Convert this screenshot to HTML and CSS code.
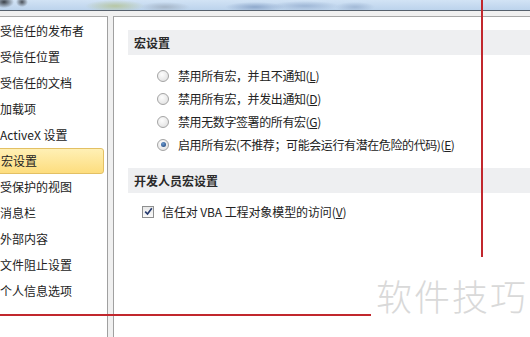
FILE: index.html
```html
<!doctype html>
<html>
<head>
    <meta charset="utf-8">
    <title>宏设置</title>
    <link rel="stylesheet" href="styles.css">
</head>
<body>

<div class="titlebar"></div>

<div class="main">
    <ul class="nav">
        <li>受信任的发布者</li>
        <li>受信任位置</li>
        <li>受信任的文档</li>
        <li>加载项</li>
        <li>ActiveX 设置</li>
        <li class="selected">宏设置</li>
        <li>受保护的视图</li>
        <li>消息栏</li>
        <li>外部内容</li>
        <li>文件阻止设置</li>
        <li>个人信息选项</li>
    </ul>

    <div class="content">
        <div class="group">宏设置</div>
        <div class="options">
            <label class="opt"><span class="radio"></span>禁用所有宏，并且不通知(<u>L</u>)</label>
            <label class="opt"><span class="radio"></span>禁用所有宏，并发出通知(<u>D</u>)</label>
            <label class="opt"><span class="radio"></span>禁用无数字签署的所有宏(<u>G</u>)</label>
            <label class="opt"><span class="radio on"></span>启用所有宏(不推荐；可能会运行有潜在危险的代码)(<u>E</u>)</label>
        </div>

        <div class="group second">开发人员宏设置</div>
        <label class="check-row">
            <span class="check"><svg width="9" height="9" viewBox="0 0 9 9"><path d="M1.2 4.6 L3.5 7 L7.8 1.3" fill="none" stroke="#253a6e" stroke-width="1.6"/></svg></span>
            信任对 VBA 工程对象模型的访问(<u>V</u>)
        </label>
    </div>
</div>

<div class="mark-v"></div>
<div class="mark-h"></div>
<div class="watermark">软件技巧</div>

</body>
</html>
```

FILE: styles.css
```css
html, body { margin: 0; }
body {
    width: 530px; height: 337px; overflow: hidden;
    position: relative;
    background: #f0f0f0;
    font-family: "Microsoft YaHei", "Noto Sans CJK SC", sans-serif;
    font-size: 12px;
    color: #222;
}

.titlebar {
    height: 10px;
    border-bottom: 1px solid #56606c;
    background:
        radial-gradient(ellipse 10px 6px at 4px 2px, #3a4048, transparent),
        radial-gradient(ellipse 6px 5px at 22px 2px, #4a5058, transparent),
        radial-gradient(ellipse 30px 6px at 115px 6px, #b7c7a4, transparent),
        radial-gradient(ellipse 25px 5px at 165px 7px, #a6b6c8, transparent),
        radial-gradient(ellipse 30px 5px at 255px 7px, #8fa9cc, transparent),
        radial-gradient(ellipse 35px 5px at 305px 6px, #9fb7d6, transparent),
        radial-gradient(ellipse 20px 5px at 355px 7px, #a2b9d6, transparent),
        linear-gradient(#d2e3f5, #bcd3ec);
}

.main {
    display: flex;
    gap: 5px;
    padding-top: 5px;
    height: 321px;
}

.nav {
    list-style: none;
    margin: 0; padding: 1px 0 0;
    width: 107px;
    background: #fff;
    border-top: 1px solid #a8a8a8;
    border-right: 1px solid #a0a0a0;
    overflow: hidden;
}
.nav li {
    height: 26px; line-height: 26px;
    white-space: nowrap;
}
.nav .selected {
    margin: 0 3px 0 -4px;
    padding-left: 4px;
    height: 24px; line-height: 24px;
    border: 1px solid #e3c064;
    border-radius: 3px;
    background: linear-gradient(#fff0b5, #fddd7e);
}

.content {
    flex: 1;
    background: #fff;
    border-top: 1px solid #a8a8a8;
    border-left: 1px solid #a0a0a0;
    padding: 13px 0 0 14px;
}

.group {
    height: 25px; line-height: 25px;
    padding-left: 6px;
    background: #eeeff1;
    font-weight: bold;
    color: #2a2a2a;
}
.group.second { margin-top: 12px; }

.options { padding: 9px 0 0 29px; }
.opt {
    display: flex; align-items: center;
    height: 23px;
    white-space: nowrap;
    letter-spacing: -0.4px;
}
.radio {
    width: 10px; height: 10px;
    margin-right: 9px;
    border: 1px solid #a4a4a4;
    border-radius: 50%;
    background: radial-gradient(circle at 40% 35%, #fdfdfd, #dcdcdc);
    display: grid; place-items: center;
}
.radio.on::after {
    content: "";
    width: 5px; height: 5px;
    border-radius: 50%;
    background: radial-gradient(circle at 40% 35%, #6a9ad0, #1c3f74);
}

.check-row {
    display: flex; align-items: center;
    height: 23px;
    margin: 7px 0 0 14px;
    white-space: nowrap;
    letter-spacing: -0.1px;
}
.check {
    width: 10px; height: 10px;
    margin-right: 8px;
    border: 1px solid #8e8f8f;
    background: linear-gradient(#e8e8e8, #fafafa);
    display: grid; place-items: center;
}

.mark-v {
    position: absolute;
    left: 481px; top: 0;
    width: 2px; height: 257px;
    background: #c1272d;
}
.mark-h {
    position: absolute;
    left: 0; top: 314px;
    width: 371px; height: 2px;
    background: #c1272d;
}
.watermark {
    position: absolute;
    left: 376px; top: 273px;
    font-size: 36px;
    line-height: 44px;
    letter-spacing: 2px;
    color: #d9d9d9;
    font-weight: 300;
}
```
